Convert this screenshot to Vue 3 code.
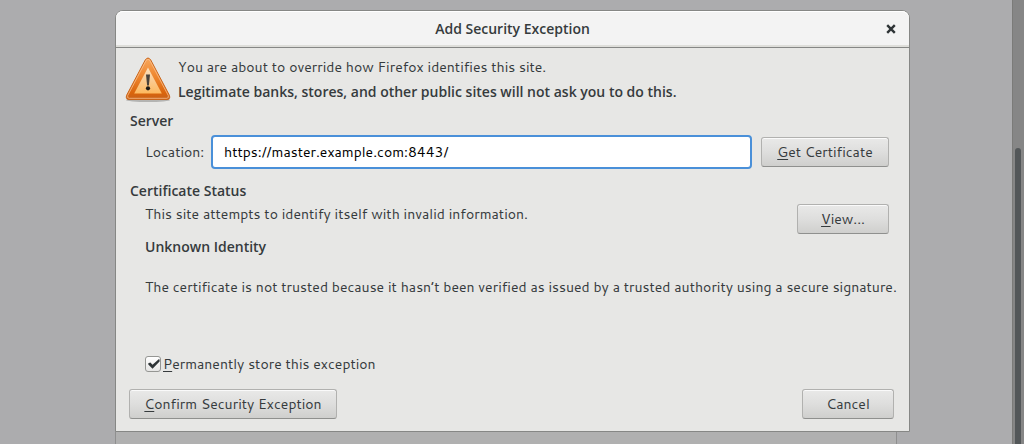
<script setup>
import { ref } from 'vue'

const location = ref('https://master.example.com:8443/')
const permanent = ref(true)
</script>

<template>
  <div class="desktop">
    <div class="backdrop" aria-hidden="true">
      <div class="page"><div class="panel"></div></div>
      <div class="track"><div class="thumb"></div></div>
    </div>

    <section class="dialog" role="dialog" aria-labelledby="title">
      <header class="titlebar">
        <h1 id="title">Add Security Exception</h1>
        <button class="close" type="button" aria-label="Close">
          <svg width="10" height="10" viewBox="0 0 10 10">
            <path d="M1.2 1.2 8.8 8.8M8.8 1.2 1.2 8.8" stroke="#2e3436" stroke-width="2.4" fill="none" />
          </svg>
        </button>
      </header>

      <div class="content">
        <div class="warning">
          <svg class="icon" width="48" height="48" viewBox="0 0 48 48" aria-hidden="true">
            <defs>
              <linearGradient id="edge" x1="0" y1="0" x2="0" y2="1">
                <stop offset="0" stop-color="#f7a65c" />
                <stop offset=".45" stop-color="#ee862e" />
                <stop offset=".85" stop-color="#d9640c" />
                <stop offset="1" stop-color="#c5621c" />
              </linearGradient>
              <linearGradient id="core" x1="0" y1="0" x2="0" y2="1">
                <stop offset="0" stop-color="#fbe0bd" />
                <stop offset=".55" stop-color="#fbc98d" />
                <stop offset="1" stop-color="#fdb95f" />
              </linearGradient>
            </defs>
            <ellipse cx="24" cy="45" rx="22" ry="2" fill="#000" opacity=".22" />
            <path d="M21.3 4.900Q24 1.200 26.700 4.900L45.500 40.500Q46.500 44.500 43 44.500H5Q1.500 44.500 2.500 40.500Z" fill="url(#edge)" stroke="#c9651a" />
            <path d="M22.100 5.500Q24 3 25.900 5.500L44.300 40.600Q45 43.300 42.800 43.300H5.200Q3 43.300 3.700 40.600Z" fill="none" stroke="#fbc391" stroke-opacity=".75" />
            <path d="M24 12.500 37.800 38.500H10.200Z" fill="url(#core)" />
            <path d="M22 19.500H26L24.900 30.500H23.100Z" fill="#49423b" />
            <circle cx="24" cy="33.300" r="2.100" fill="#1d1a17" />
          </svg>
          <div class="warning-text">
            <p>You are about to override how Firefox identifies this site.</p>
            <p class="strong">Legitimate banks, stores, and other public sites will not ask you to do this.</p>
          </div>
        </div>

        <h2>Server</h2>
        <div class="row server">
          <label for="location">Location:</label>
          <input id="location" v-model="location" type="text" spellcheck="false" />
          <button class="btn certificate" type="button"><u>G</u>et Certificate</button>
        </div>

        <h2>Certificate Status</h2>
        <div class="row status">
          <p>This site attempts to identify itself with invalid information.</p>
          <button class="btn small" type="button"><u>V</u>iew...</button>
        </div>
        <h3>Unknown Identity</h3>
        <p class="description">The certificate is not trusted because it hasn’t been verified as issued by a trusted authority using a secure signature.</p>

        <div class="store">
          <span class="tick">
            <input id="store" v-model="permanent" type="checkbox" />
            <svg v-if="permanent" width="16" height="16" viewBox="0 0 16 16" aria-hidden="true">
              <path d="M3.300 7.300 5.400 6.500 7.500 8.700 14 3 14.600 3.800V5.600L7.500 12.800 3.300 8.500Z" fill="#2e3436" />
            </svg>
          </span>
          <label for="store"><u>P</u>ermanently store this exception</label>
        </div>
      </div>

      <footer class="actions">
        <button class="btn confirm" type="button"><u>C</u>onfirm Security Exception</button>
        <button class="btn small" type="button">Cancel</button>
      </footer>
    </section>
  </div>
</template>

<style>
body {
  margin: 0;
  background: #acacae;
}
</style>

<style scoped>
* {
  box-sizing: border-box;
}

.desktop {
  position: relative;
  min-height: 100vh;
  padding: 10px 114px 12px 115px;
  color: #363b3d;
  font: 14px/20px Cantarell, "Open Sans", "Noto Sans", sans-serif;
}

.backdrop {
  position: absolute;
  inset: 0;
  display: flex;
  background: #acacae;
}

.page {
  flex: 1;
  padding: 236px 115px 0;
  display: flex;
}

.panel {
  flex: 1;
  background: #b0b0b0;
  border: solid #8f8f8f;
  border-width: 0 1px;
}

.track {
  width: 12px;
  padding: 148px 3px 0 2px;
  display: flex;
  background: #868686;
  border-left: 1px solid #7b7b79;
}

.thumb {
  flex: 1;
  border-radius: 3px 3px 0 0;
  background: #535759;
}

.dialog {
  position: relative;
  border: 1px solid #868785;
  border-radius: 8px 8px 0 0;
  background: #e7e7e5;
}

h1,
h2,
h3,
p {
  margin: 0;
  font-size: 14px;
  line-height: 20px;
}

h1,
h2,
h3,
.strong {
  font-family: "Open Sans", "Noto Sans", sans-serif;
  font-weight: 600;
}

u {
  text-decoration-thickness: 1px;
  text-underline-offset: 2px;
  text-decoration-skip-ink: none;
}

.titlebar {
  display: grid;
  grid-template-columns: 36px 1fr 36px;
  align-items: center;
  height: 37px;
  text-align: center;
  border-bottom: 1px solid #868785;
  border-radius: 7px 7px 0 0;
  background: #f3f3f3;
  box-shadow: inset 0 1px #fff, inset 0 -2px #dededa;
}

.titlebar h1 {
  grid-column: 2;
}

.close {
  display: grid;
  place-items: center;
  width: 24px;
  height: 24px;
  margin-left: 6px;
  padding: 0;
  border: 0;
  background: none;
}

.content {
  padding: 7px 20px 0 14px;
}

.warning {
  display: flex;
  align-items: flex-start;
  gap: 6px;
  margin-left: -6px;
  height: 56px;
}

.warning .icon {
  flex: none;
}

.warning-text {
  display: grid;
  gap: 5px;
  padding-top: 2px;
}

.row,
.actions {
  display: flex;
}

.server {
  align-items: center;
  gap: 9px;
  margin: 4px 0 12px 15px;
}

.server label {
  flex: none;
  width: 57px;
}

.server input {
  flex: 1;
  min-width: 0;
  height: 34px;
  padding: 0 11px;
  border: 2px solid #4a90d9;
  border-radius: 4px;
  outline: 0;
  background: #fff;
  color: #000;
  font: inherit;
}

.btn {
  height: 30px;
  padding: 0;
  border: 1px solid #b1b1af;
  border-bottom-color: #8f908e;
  border-radius: 3px;
  background: linear-gradient(#e9e9e8, #dededd 50%, #cfcfcd);
  box-shadow: inset 0 1px #fafafa;
  color: inherit;
  font: inherit;
}

.certificate {
  width: 128px;
}

.confirm {
  width: 208px;
}

.small {
  width: 92px;
}

.status {
  justify-content: space-between;
  align-items: flex-start;
  margin-left: 15px;
  height: 36px;
  padding-top: 3px;
}

.status .btn {
  flex: none;
}

h3 {
  margin-left: 15px;
}

.description {
  margin: 20px 0 0 15px;
  min-height: 77px;
  white-space: nowrap;
}

.store {
  display: flex;
  align-items: center;
  gap: 2px;
  margin-left: 15px;
}

.tick {
  position: relative;
  display: grid;
  width: 16px;
  height: 16px;
}

.tick input {
  appearance: none;
  margin: 0;
  width: 16px;
  height: 16px;
  border: 1px solid #959693;
  border-radius: 3px;
  background: linear-gradient(#fff, #e6e6e5);
}

.tick svg {
  position: absolute;
  inset: 0;
  pointer-events: none;
}

.actions {
  justify-content: space-between;
  padding: 15px 15px 12px 13px;
}
</style>
